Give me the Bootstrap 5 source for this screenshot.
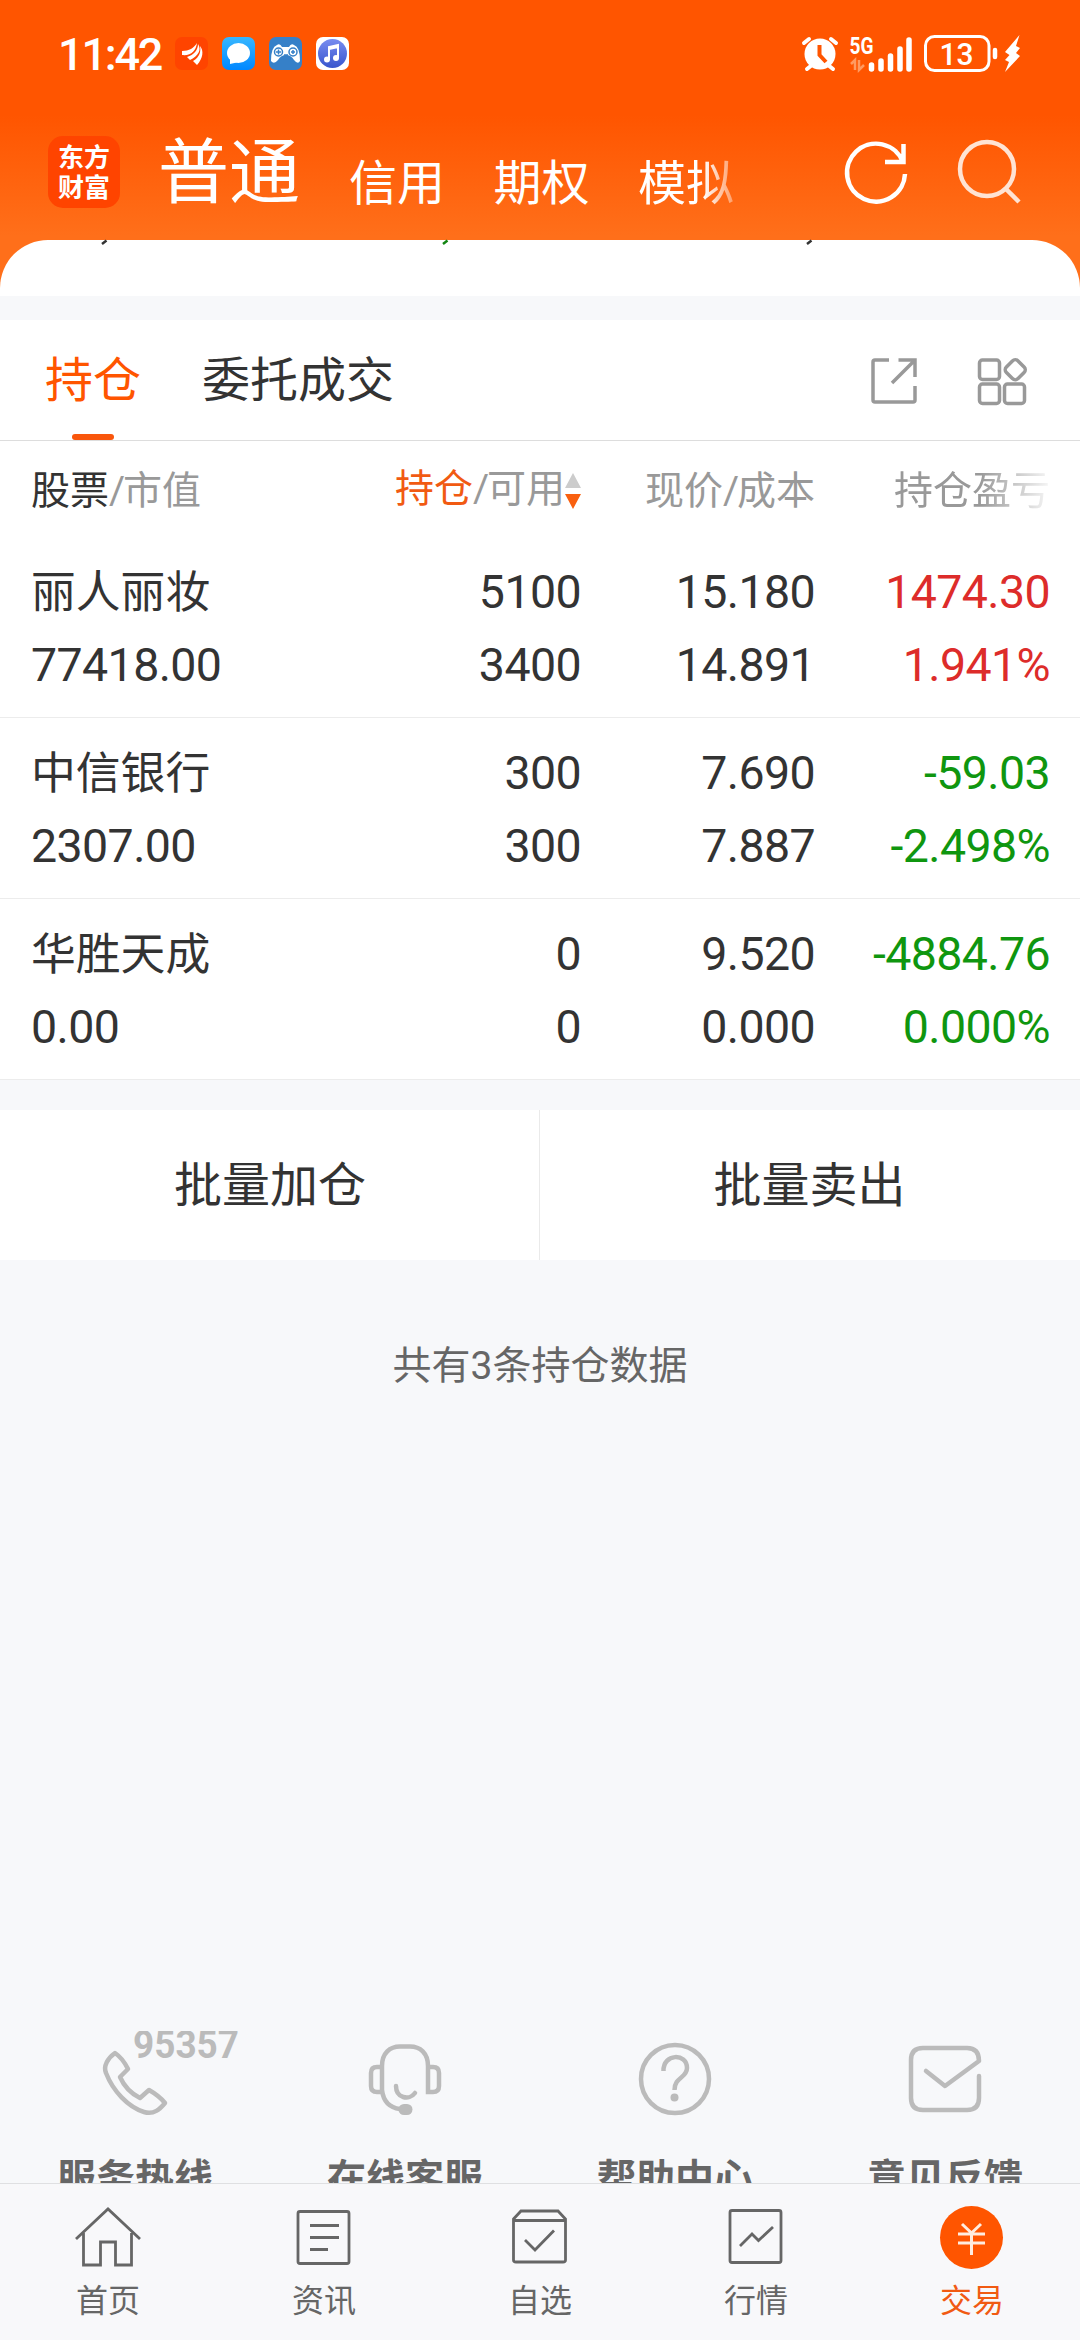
<!DOCTYPE html>
<html lang="zh-CN">
<head>
<meta charset="utf-8">
<meta name="viewport" content="width=device-width, initial-scale=1">
<title>东方财富 交易</title>
<link href="https://cdn.jsdelivr.net/npm/bootstrap@5.3.0/dist/css/bootstrap.min.css" rel="stylesheet">
<style>
body{width:1080px;height:2340px;overflow:hidden;background:#f7f8fa;color:#333;font-family:Roboto,"Noto Sans CJK SC",sans-serif;font-size:39px;line-height:1}
svg{display:block;flex:none;overflow:visible}
.line-icon{fill:none;stroke:currentColor}
.top-area{height:296px;background:linear-gradient(#ff5500 115px,#ff6f1a 236px)}
.status{height:108px;padding:35px 55px 0 58px}
.clock{font-size:45px;line-height:40px;font-weight:500;width:117px;letter-spacing:-2.2px}
.app-icons{gap:14px;padding-top:2px}
.heading{height:132px;padding:0 58px 0 48px}
.heading svg{margin-top:28px}
.logo{width:72px;height:72px;border-radius:15px;background:#f40;font-size:26px;line-height:30px;font-weight:700;margin-top:28px;padding-top:7px}
.main-tab{font-size:71px;line-height:72px;margin:29px 0 0 38px;width:191px}
.sub-tab{font-size:48px;line-height:48px;margin-top:52px;width:144.5px;white-space:nowrap}
.fade-tab{-webkit-mask-image:linear-gradient(90deg,#000 65px,rgba(0,0,0,.35) 96px);mask-image:linear-gradient(90deg,#000 65px,rgba(0,0,0,.35) 96px)}
.sheet{height:56px;border-radius:48px 48px 0 0}
.tabs{height:121px;margin-top:24px;border-bottom:1px solid #ddd;font-size:48px;padding:0 53px 0 45px}
.tab-item{line-height:122px;height:120px;width:96px;margin-right:61px;white-space:nowrap}
.tab-item.on{color:#ff5500}
.tab-item.on::after{content:"";display:block;width:42px;height:6px;border-radius:3px;background:#f9560c;margin:-8px auto 0 27px}
.cols{padding:0 30px 0 31px}
.cell-a{flex:1}.cell-b{width:250px}.cell-c{width:234px}.cell-d{width:235px}
.head-row{height:96px;line-height:100px;color:#999;white-space:nowrap}
.head-row i{font-style:normal;display:inline-block;width:14px;text-align:center}
.fade-head{-webkit-mask-image:linear-gradient(90deg,#000 165px,rgba(0,0,0,.12) 232px);mask-image:linear-gradient(90deg,#000 165px,rgba(0,0,0,.12) 232px)}
.hot{color:#f15a12}
.stock{height:181px;padding-top:19px;line-height:73px;font-size:46.5px;letter-spacing:-.6px;border-bottom:1px solid #ececec}
.stock-name{font-size:44.8px;letter-spacing:0}
.up{color:#dd2c2a}.down{color:#0f960f}
.actions{height:150px;margin-top:30px;font-size:48px;line-height:152px}
.actions>div+div{border-left:1px solid #eaeaea;margin-left:-1px}
.summary{color:#666;line-height:40px;margin-top:86px}
.support{height:152px;margin-top:auto;color:#bbb;overflow:hidden;font-weight:700}
.support span{color:#666;line-height:40px;height:24px;white-space:nowrap}
.support svg{margin-bottom:32px}
.bottom-nav{height:157px;border-top:1px solid #dfe0e2;background:#f8f8fa;color:#666;font-size:32px}
.bottom-nav svg{margin:18px 0 12px}
.bottom-nav span{line-height:40px;margin-top:-1px}
</style>
<script src="https://cdn.jsdelivr.net/npm/bootstrap@5.3.0/dist/js/bootstrap.bundle.min.js"></script>
</head>
<body class="d-flex flex-column">
<header class="top-area text-white flex-shrink-0">
  <div class="status d-flex align-items-start">
    <div class="clock">11:42</div>
    <div class="app-icons d-flex">
      <svg width="33" height="33"><rect width="33" height="33" rx="7" fill="#f40"/><g fill="#fff"><path d="M7 14C14 14 19 11 22 6C21 14 16 19 7 18Z"/><path d="M12 20C19 18 23 13 23 7C27 13 23 19 15 23Z"/><path d="M18 24C25 20 26 14 25 9C29 14 28 21 22 28Z"/></g></svg>
      <svg width="33" height="33"><defs><linearGradient id="ch" x2="0" y2="1"><stop stop-color="#37b7ff"/><stop offset="1" stop-color="#0087ff"/></linearGradient></defs><rect width="33" height="33" rx="7" fill="url(#ch)"/><ellipse cx="16.500" cy="16" rx="11.500" ry="10" fill="#fff"/><path d="M8 20L8 27L17 25Z" fill="#fff"/></svg>
      <svg width="33" height="33"><rect width="33" height="33" rx="7" fill="#3680c8"/><path d="M8 8Q11 6 13 10H20Q22 6 25 8Q31 10 31 24Q29 28 25 23Q22 18 17 18Q12 18 9 23Q5 28 2 24Q2 10 8 8Z" fill="#fff"/><g fill="none" stroke="#3680c8" stroke-width="1.500"><circle cx="9.500" cy="15" r="4"/><circle cx="24" cy="15" r="4"/><path d="M7 15H12M9.500 12.500V17.500M22 15H26M24 13V17M15 18H19"/></g></svg>
      <svg width="33" height="33"><defs><linearGradient id="mu" x2="0" y2="1"><stop stop-color="#788cf0"/><stop offset="1" stop-color="#3855cd"/></linearGradient></defs><rect width="33" height="33" rx="7" fill="#fff"/><circle cx="16.500" cy="16.500" r="14.500" fill="url(#mu)"/><path d="M13 23V10L22 8V21M13 12L22 10" fill="none" stroke="#fff" stroke-width="2"/><circle cx="11" cy="22.500" r="3" fill="#fff"/><circle cx="20" cy="21" r="3" fill="#fff"/></svg>
    </div>
    <svg class="ms-auto" width="223" height="40" viewBox="802 35 223 40">
      <circle cx="820" cy="54" r="15.500" fill="#fff"/><path d="M819.500 45V55L826 62" stroke="#f50" stroke-width="4" fill="none"/><path d="M804 43L809 39M831 39L836 43M812 65L807 69M828 65L833 69" stroke="#fff" stroke-width="4" stroke-linecap="round"/>
      <text x="849.500" y="53.500" font-size="23" font-weight="700" fill="#fff" textLength="24" lengthAdjust="spacingAndGlyphs">5G</text>
      <path d="M851 64L855 60V70M859 60V70L864 65" stroke="#ff9b62" stroke-width="2.500" fill="none"/>
      <path d="M871.500 65V69M881 61V69M890.500 56V69M900 49V69M909 40V69" stroke="#fff" stroke-width="5.500" stroke-linecap="round"/>
      <rect x="925.500" y="36.500" width="63.500" height="34" rx="9" fill="none" stroke="#fff" stroke-width="3"/><path d="M995 50V57" stroke="#fff" stroke-width="4.500" stroke-linecap="round"/>
      <text x="956.500" y="65" font-size="32" font-weight="500" fill="#fff" text-anchor="middle" textLength="34" lengthAdjust="spacingAndGlyphs">13</text>
      <path d="M1019.500 35L1005 52L1009.500 55L1005 60L1009 62L1005 72L1020 56L1016 53L1020 48L1016 46Z" fill="#fff"/>
    </svg>
  </div>
  <nav class="heading d-flex align-items-start">
    <div class="logo text-center">东方<br>财富</div>
    <div class="main-tab">普通</div>
    <div class="sub-tab">信用</div><div class="sub-tab">期权</div><div class="sub-tab fade-tab">模拟</div>
    <svg class="ms-auto" width="178" height="72" viewBox="844 136 178 72" fill="none" stroke="#fff" stroke-width="4.500"><path d="M903 162A29 29 0 1 0 905 174M903.500 144V162H885" /><g stroke="#ffe3d3"><circle cx="987" cy="169" r="27"/><path d="M1006 189L1019 202"/></g></svg>
  </nav>
  <div class="sheet bg-white"><svg width="1080" height="5"><path d="M102 4L106.500 .5M807 4L811.500 .5" stroke="#333" stroke-width="2.500"/><path d="M443 4L447.500 .5" stroke="#128512" stroke-width="2.500"/></svg></div>
</header>

<nav class="tabs d-flex bg-white flex-shrink-0">
  <div class="tab-item on">持仓</div><div class="tab-item">委托成交</div>
  <svg class="ms-auto line-icon mt-auto mb-auto" width="156" height="50" viewBox="871 355 156 50" color="#999" stroke-width="3.500"><path d="M889 360H875Q873 360 873 362V400Q873 402 875 402H913Q915 402 915 400V386M898.500 360H915V377M915 360L892 383"/><rect x="979.500" y="360" width="20" height="19.500" rx="3"/><rect x="979.500" y="384" width="20" height="19.500" rx="3"/><rect x="1004.500" y="384" width="20" height="19.500" rx="3"/><rect x="1007" y="361.500" width="16.500" height="16.500" rx="4" transform="rotate(45 1015.250 369.750)"/></svg>
</nav>
<main class="bg-white flex-shrink-0">
  <div class="cols head-row d-flex text-end">
    <div class="cell-a text-start"><span class="text-body-emphasis" style="--bs-emphasis-color:#333">股票</span><i>/</i>市值</div>
    <div class="cell-b d-flex justify-content-end align-items-center"><span class="hot">持仓</span><i>/</i>可用<svg class="mt-1" width="16" height="36"><path d="M8 0L16 15H0Z" fill="#ccc"/><path d="M0 21H16L8 36Z" fill="#f9600f"/></svg></div>
    <div class="cell-c">现价<i>/</i>成本</div>
    <div class="cell-d fade-head">持仓盈亏</div>
  </div>
  <div class="cols stock d-flex text-end"><div class="cell-a text-start"><div class="stock-name">丽人丽妆</div>77418.00</div><div class="cell-b">5100<br>3400</div><div class="cell-c">15.180<br>14.891</div><div class="cell-d up">1474.30<br>1.941%</div></div>
  <div class="cols stock d-flex text-end"><div class="cell-a text-start"><div class="stock-name">中信银行</div>2307.00</div><div class="cell-b">300<br>300</div><div class="cell-c">7.690<br>7.887</div><div class="cell-d down">-59.03<br>-2.498%</div></div>
  <div class="cols stock d-flex text-end"><div class="cell-a text-start"><div class="stock-name">华胜天成</div>0.00</div><div class="cell-b">0<br>0</div><div class="cell-c">9.520<br>0.000</div><div class="cell-d down">-4884.76<br>0.000%</div></div>
</main>
<div class="actions d-flex text-center bg-white flex-shrink-0"><div class="w-50">批量加仓</div><div class="w-50">批量卖出</div></div>
<div class="summary text-center">共有3条持仓数据</div>

<section class="support d-flex flex-shrink-0 text-center">
  <div class="w-25 d-flex flex-column align-items-center">
    <svg class="line-icon" width="76" height="96" viewBox="97 2031 76 96" stroke-width="4.500" stroke-linejoin="round"><path d="M115 2053C108 2058 103 2066 106 2073C113 2091 128 2107 144 2112C154 2115 160 2109 165 2103C161 2098 156 2094 149 2090L140 2098C132 2094 124 2086 120 2077L128 2069C125 2063 121 2057 115 2053Z"/><text x="133" y="2058" font-size="38" font-weight="700" fill="#bbb" stroke="none" textLength="106" lengthAdjust="spacingAndGlyphs">95357</text></svg><span>服务热线</span>
  </div>
  <div class="w-25 d-flex flex-column align-items-center">
    <svg class="line-icon" width="76" height="96" viewBox="367 2031 76 96" stroke-width="4.500" stroke-linecap="round"><path d="M382 2092H377Q371 2092 371 2086V2073Q371 2067 377 2067H382V2066C382 2053 390 2046.500 400 2046.500H410C420 2046.500 428 2053 428 2066V2092H433Q439 2092 439 2086V2073Q439 2067 433 2067H428M382 2067V2090Q384 2107 400 2109M396 2086C396 2098 409 2101 415 2093"/><rect x="398.500" y="2104" width="14" height="11" rx="5.500" fill="#bbb" stroke="none"/></svg><span>在线客服</span>
  </div>
  <div class="w-25 d-flex flex-column align-items-center">
    <svg class="line-icon" width="76" height="96" viewBox="637 2031 76 96" stroke-width="4.500"><circle cx="675" cy="2079" r="34"/><path d="M663.500 2071C663 2053 687 2053 687 2068C687 2078 674.500 2077 674.500 2090"/><circle cx="674.500" cy="2097.500" r="4" fill="#bbb" stroke="none"/></svg><span>帮助中心</span>
  </div>
  <div class="w-25 d-flex flex-column align-items-center">
    <svg class="line-icon" width="76" height="96" viewBox="907 2031 76 96" stroke-width="4.500" stroke-linecap="round" stroke-linejoin="round"><path d="M979 2076V2098Q979 2110 967 2110H923Q911 2110 911 2098V2060Q911 2048 923 2048H967Q979 2048 979 2061L945 2086L926 2071"/></svg><span>意见反馈</span>
  </div>
</section>
<nav class="bottom-nav d-flex flex-shrink-0">
  <div class="col d-flex flex-column align-items-center"><svg class="line-icon" width="66" height="68" viewBox="75 2202 66 68" stroke-width="2.800"><path d="M76 2239L108 2209L140 2239M83.500 2233V2265H100.500V2242H115.500V2265H131.500V2233"/></svg><span>首页</span></div>
  <div class="col d-flex flex-column align-items-center"><svg class="line-icon" width="66" height="68" viewBox="291 2202 66 68" stroke-width="2.800"><rect x="298" y="2211.500" width="51" height="52" rx="2"/><path d="M310 2225.500H339M310 2237.500H339M310 2249.500H328"/></svg><span>资讯</span></div>
  <div class="col d-flex flex-column align-items-center"><svg class="line-icon" width="66" height="68" viewBox="507 2202 66 68" stroke-width="2.800"><path d="M513.500 2219L521 2211H558L565.500 2219V2260Q565.500 2262 563 2262H516Q513.500 2262 513.500 2260ZM513.500 2220.500H565.500M525 2240L535 2250L554 2230.500"/></svg><span>自选</span></div>
  <div class="col d-flex flex-column align-items-center"><svg class="line-icon" width="66" height="68" viewBox="723 2202 66 68" stroke-width="2.800"><rect x="730" y="2210.500" width="51" height="52" rx="2"/><path d="M740 2246L752 2234L758.500 2240.500L773 2227"/></svg><span>行情</span></div>
  <div class="col d-flex flex-column align-items-center hot"><svg width="66" height="68" viewBox="939 2202 66 68"><circle cx="971.500" cy="2237.500" r="31.500" fill="#f50"/><path d="M962 2224L971.500 2233L981 2224M971.500 2233V2255M958 2234H985M958 2243H985" fill="none" stroke="#ffecdf" stroke-width="3"/></svg><span>交易</span></div>
</nav>
</body>
</html>
